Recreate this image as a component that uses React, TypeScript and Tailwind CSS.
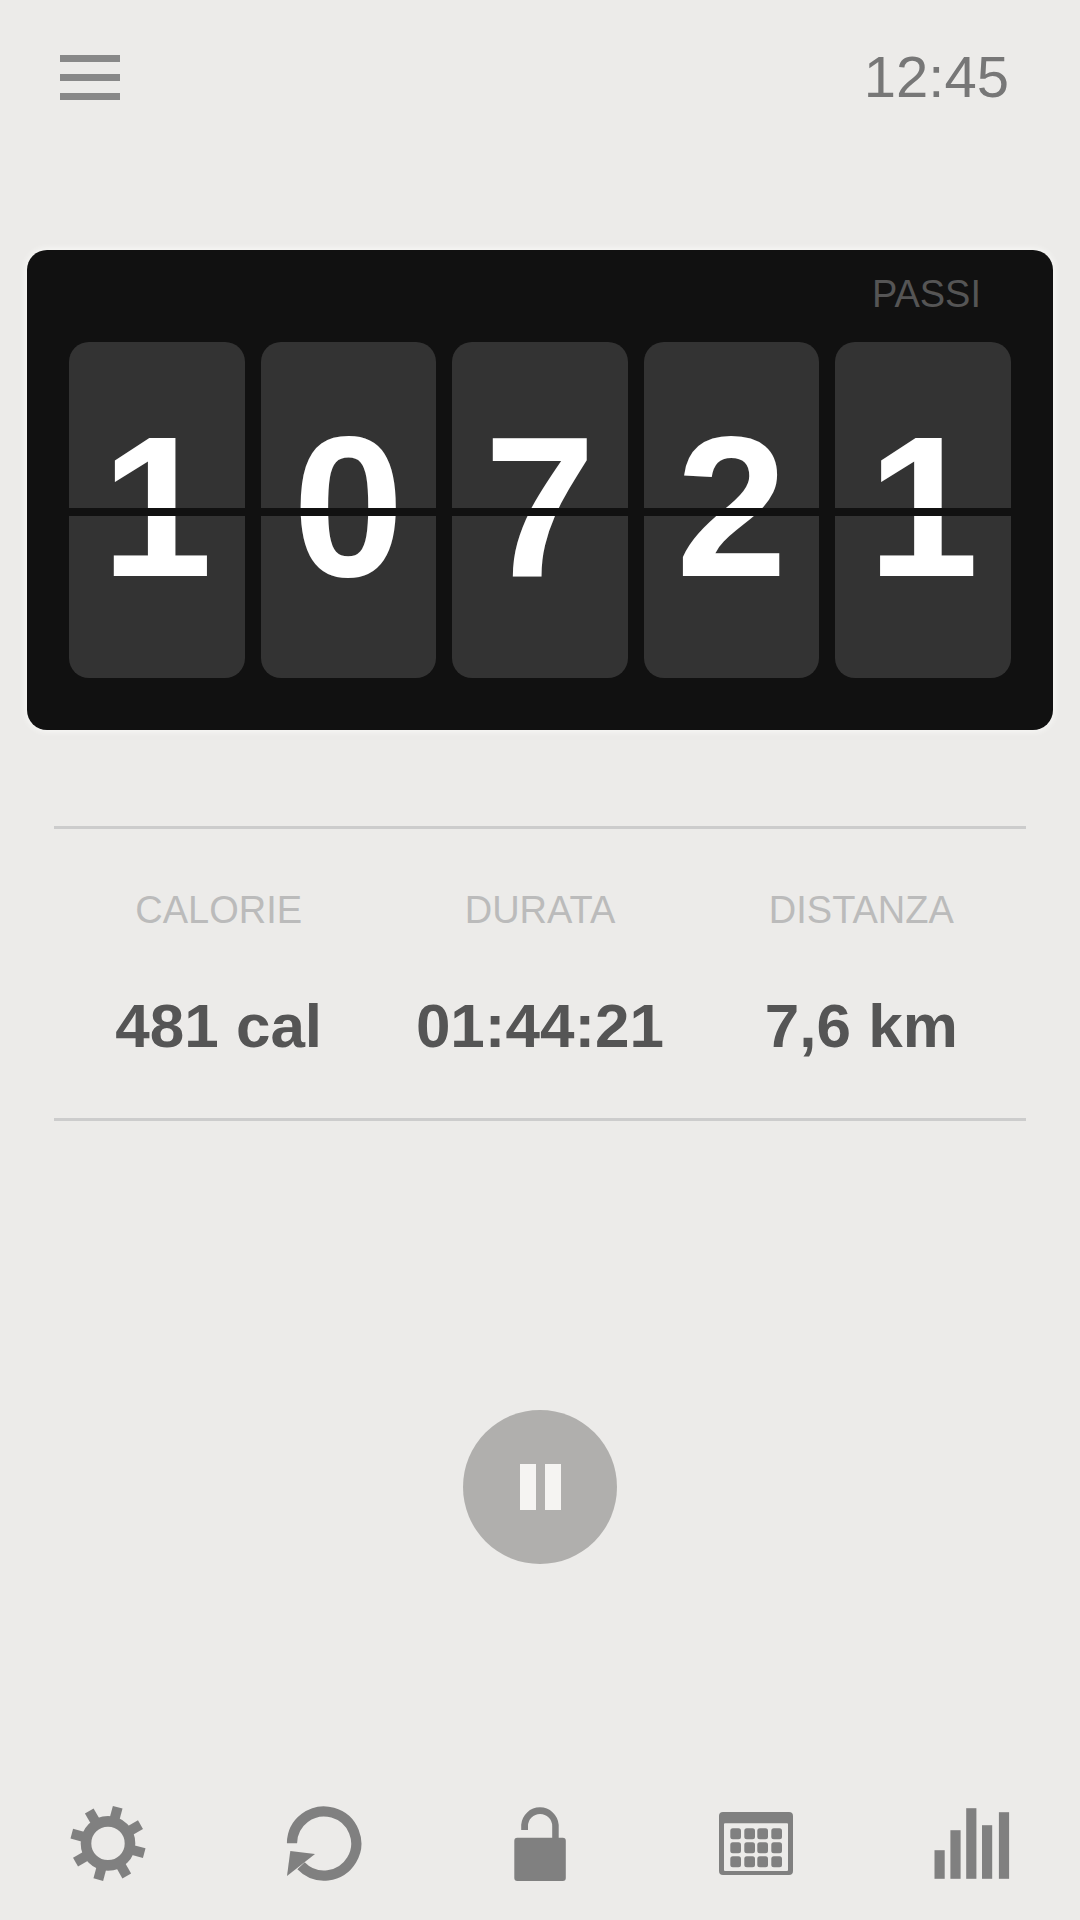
import type React from "react";
import { useState } from "react";

type Stat = {
    label: string;
    value: string;
}

const steps = "10721"

const stats: Stat[] = [
    { label: "CALORIE", value: "481 cal" },
    { label: "DURATA", value: "01:44:21" },
    { label: "DISTANZA", value: "7,6 km" },
]

const teeth = [15, 60, 105, 150, 195, 240, 285, 330]
const calendarCols = [14, 28, 41, 55]
const calendarRows = [24, 38, 52]

const Icon:React.FC<{ children: React.ReactNode }> = ({ children })=>(
    <svg className="size-20" viewBox="0 0 80 80" fill="currentColor" aria-hidden="true">
        {children}
    </svg>
)

const GearIcon = ()=>(
    <Icon>
        <circle cx="40" cy="39.4" r="22" fill="none" stroke="currentColor" strokeWidth="10.6" />
        {teeth.map((angle)=>(
            <rect key={angle} x="35" y="1.9" width="10" height="13" transform={`rotate(${angle} 40 39.4)`} />
        ))}
    </Icon>
)

const ResetIcon = ()=>(
    <Icon>
        <path d="M8 39.3A32.1 32.1 0 1 1 17 61.8" fill="none" stroke="currentColor" strokeWidth="10.2" />
        <path d="M6.3 47L31 50L3 72Z" />
    </Icon>
)

const UnlockIcon = ()=>(
    <Icon>
        <rect x="14.3" y="33.7" width="51.5" height="43.3" rx="3" />
        <path d="M21.2 26V20.8A18.8 18.8 0 0 1 58.7 20.8V35H52.2V22A12.1 12.1 0 0 0 28 22V26Z" />
    </Icon>
)

const CalendarIcon = ()=>(
    <Icon>
        <path fillRule="evenodd" d="M7 8H73A4 4 0 0 1 77 12V67A4 4 0 0 1 73 71H7A4 4 0 0 1 3 67V12A4 4 0 0 1 7 8ZM9 19.2A1 1 0 0 0 8 20.2V66A1 1 0 0 0 9 67H71A1 1 0 0 0 72 66V20.2A1 1 0 0 0 71 19.2Z" />
        {calendarRows.map((y)=>calendarCols.map((x)=>(
            <rect key={`${x}-${y}`} x={x + 0.3} y={y + 0.2} width="10.7" height="11" rx="2.5" />
        )))}
    </Icon>
)

const ChartIcon = ()=>(
    <Icon>
        <rect x="2.5" y="46.2" width="10.2" height="28.6" />
        <rect x="18.4" y="26.2" width="10.2" height="48.6" />
        <rect x="34.2" y="4.2" width="10.2" height="70.6" />
        <rect x="50" y="21.2" width="10.2" height="53.6" />
        <rect x="66.9" y="8.2" width="10.2" height="66.6" />
    </Icon>
)

const navItems = [
    { name: "Impostazioni", icon: <GearIcon /> },
    { name: "Azzera", icon: <ResetIcon /> },
    { name: "Sblocca", icon: <UnlockIcon /> },
    { name: "Calendario", icon: <CalendarIcon /> },
    { name: "Statistiche", icon: <ChartIcon /> },
]

const FlipDigit:React.FC<{ digit: string }> = ({ digit })=>(
    <div className="relative flex-1 rounded-[20px] bg-[#333333] pb-1.5 text-center text-[200px] leading-[330px] font-bold text-white">
        {digit}
        {/* hinge between the two flaps */}
        <span className="absolute inset-x-0 top-[166px] h-2 bg-[#111111]" />
    </div>
)

const App:React.FC = ()=>{
    const [paused, setPaused] = useState<boolean>(false)

    return(
        <div className="flex min-h-screen flex-col bg-[#ecebe9] font-['Liberation_Sans',Arial,sans-serif]">
            <header className="flex h-[154px] items-center justify-between pr-[71px] pl-[60px]">
                <button type="button" aria-label="Menu" className="flex w-15 flex-col gap-3">
                    <span className="h-[7px] w-full bg-[#888888]" />
                    <span className="h-[7px] w-full bg-[#888888]" />
                    <span className="h-[7px] w-full bg-[#888888]" />
                </button>
                <time className="text-[58px] leading-[64px] text-[#777777]">12:45</time>
            </header>

            <main>
                <section className="mx-[2.5%] mt-24 rounded-[20px] bg-[#111111] px-[42px] pt-5 pb-[52px] shadow-[0_0_6px_1px_#fafaf8]">
                    <h1 className="mb-6 pr-[30px] text-right text-[38px] leading-[48px] text-[#555555]">PASSI</h1>
                    <div className="flex gap-4">
                        {steps.split("").map((digit, index)=>(
                            <FlipDigit digit={digit} key={index} />
                        ))}
                    </div>
                </section>

                <dl className="mx-[5%] mt-24 grid grid-cols-3 border-y-3 border-[#cccccc] px-1 pt-[57px] pb-14 text-center">
                    {stats.map((stat)=>(
                        <div key={stat.label} className="flex flex-col gap-14">
                            <dt className="text-[38px] leading-[48px] text-[#bbbbbb]">{stat.label}</dt>
                            <dd className="text-[62px] leading-[72px] font-bold text-[#555555]">{stat.value}</dd>
                        </div>
                    ))}
                </dl>

                <button
                    type="button"
                    aria-label="Pausa"
                    aria-pressed={paused}
                    onClick={()=>{setPaused(!paused)}}
                    className="mx-auto mt-[289px] flex size-[154px] items-center justify-center gap-[9px] rounded-full bg-[#b0afad]"
                >
                    <span className="h-[46px] w-4 bg-[#f5f4f2]" />
                    <span className="h-[46px] w-4 bg-[#f5f4f2]" />
                </button>
            </main>

            <nav className="mt-auto grid grid-cols-5 justify-items-center pb-9 text-[#808080]">
                {navItems.map((item)=>(
                    <button type="button" aria-label={item.name} key={item.name}>
                        {item.icon}
                    </button>
                ))}
            </nav>
        </div>
    )
}

export default App;
